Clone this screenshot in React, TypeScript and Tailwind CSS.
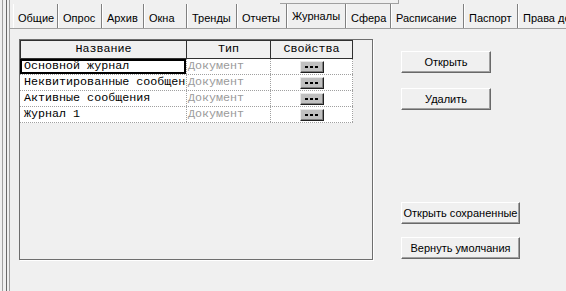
import React from "react";

const tabs = [
  { label: "Общие", w: "w-[45px]" },
  { label: "Опрос", w: "w-[44px]" },
  { label: "Архив", w: "w-[42px]" },
  { label: "Окна", w: "w-[43px]" },
  { label: "Тренды", w: "w-[50px]" },
  { label: "Отчеты", w: "w-[50px]" },
  { label: "Журналы", w: "w-[59px]", active: true },
  { label: "Сфера", w: "w-[45px]" },
  { label: "Расписание", w: "w-[73px]" },
  { label: "Паспорт", w: "w-[54px]" },
  { label: "Права доступа", w: "w-[90px]" },
];

const journals = ["Основной журнал", "Неквитированные сообщения", "Активные сообщения", "Журнал 1"];

function DotsButton() {
  return (
    <div className="w-[24px] h-[12px] bg-[#c0c0c0] border-t border-l border-t-[#e8e8e8] border-l-[#e8e8e8] border-r border-b border-r-[#202020] border-b-[#202020] shadow-[inset_-1px_-1px_0_#808080] flex items-center justify-center gap-[2px] pt-[1px]">
      <span className="w-[3px] h-[2px] bg-black" />
      <span className="w-[3px] h-[2px] bg-black" />
      <span className="w-[3px] h-[2px] bg-black" />
    </div>
  );
}

function WinButton({ label, w, className }: { label: string; w: string; className?: string }) {
  return (
    <div
      className={`${w} h-[22px] flex-none flex items-center justify-center bg-[#f0f0f0] border border-t-white border-l-white border-r-[#696969] border-b-[#696969] shadow-[inset_-1px_-1px_0_#a0a0a0] text-[11px] leading-[13px] whitespace-nowrap ${className ?? ""}`}
    >
      {label}
    </div>
  );
}

export default function App() {
  return (
    <div className="w-[566px] h-[291px] bg-[#f0f0f0] flex overflow-hidden text-black font-['Liberation_Sans',Arial,sans-serif]">
      {/* outer frame lines */}
      <div className="w-[2px] flex-none" />
      <div className="w-px flex-none bg-[#a0a0a0]" />
      <div className="w-[3px] flex-none" />
      <div className="w-px flex-none bg-[#696969]" />
      <div className="w-[2px] flex-none" />

      <div className="flex-1 min-w-0 flex flex-col border-l border-[#a0a0a0]">
        {/* tab strip */}
        <div className="h-[29px] flex-none flex flex-col border-b border-[#a0a0a0]">
          <div className="h-[4px] flex">
            <div className="ml-[270px] w-[119px] border-b border-r border-[#a0a0a0]" />
          </div>
          <div className="flex-1 flex pl-[3px] overflow-hidden">
            {tabs.map((t) => (
              <div
                key={t.label}
                className={`${t.w} flex-none border-l border-white border-r border-r-[#808080] pl-1 text-[11px] leading-[13px] whitespace-nowrap overflow-hidden ${
                  t.active ? "pt-[6px]" : "pt-[8px]"
                }`}
              >
                {t.label}
              </div>
            ))}
          </div>
        </div>

        {/* page content */}
        <div className="flex-1 flex pt-[10px] pl-[9px]">
          <div className="w-[354px] h-[221px] flex-none border border-[#6e6e6e] shadow-[1px_1px_0_#ffffff] font-['Liberation_Mono','Courier_New',monospace] text-[11.7px]">
            <div className="w-[333px]">
              {/* header */}
              <div className="flex h-[19px] border-t border-b border-l border-[#303030] bg-[#f0f0f0] leading-[17px]">
                <div className="w-[166px] border-r border-[#303030] text-center">Название</div>
                <div className="w-[84px] border-r border-[#303030] text-center">Тип</div>
                <div className="w-[82px] border-r border-[#303030] text-center">Свойства</div>
              </div>
              {/* rows */}
              {journals.map((name, i) => (
                <div key={name} className="flex h-[16px] bg-white border-b border-dotted border-[#a0a0a0] leading-[15px]">
                  <div
                    className={`w-[167px] border-r border-dotted border-[#a0a0a0] pl-[4px] whitespace-nowrap overflow-hidden ${
                      i === 0 ? "shadow-[inset_0_0_0_2px_#000]" : ""
                    }`}
                  >
                    {name}
                  </div>
                  <div className="w-[84px] border-r border-dotted border-[#a0a0a0] pl-[1px] text-[#9a9a9a] whitespace-nowrap overflow-hidden">
                    Документ
                  </div>
                  <div className="w-[82px] border-r border-dotted border-[#a0a0a0] flex items-center justify-center">
                    <DotsButton />
                  </div>
                </div>
              ))}
            </div>
          </div>

          {/* action buttons */}
          <div className="flex flex-col ml-[28px] pt-[12px]">
            <WinButton label="Открыть" w="w-[90px]" />
            <WinButton label="Удалить" w="w-[90px]" className="mt-[15px]" />
            <WinButton label="Открыть сохраненные" w="w-[119px]" className="mt-[92px]" />
            <WinButton label="Вернуть умолчания" w="w-[119px]" className="mt-[13px]" />
          </div>
        </div>
      </div>
    </div>
  );
}
